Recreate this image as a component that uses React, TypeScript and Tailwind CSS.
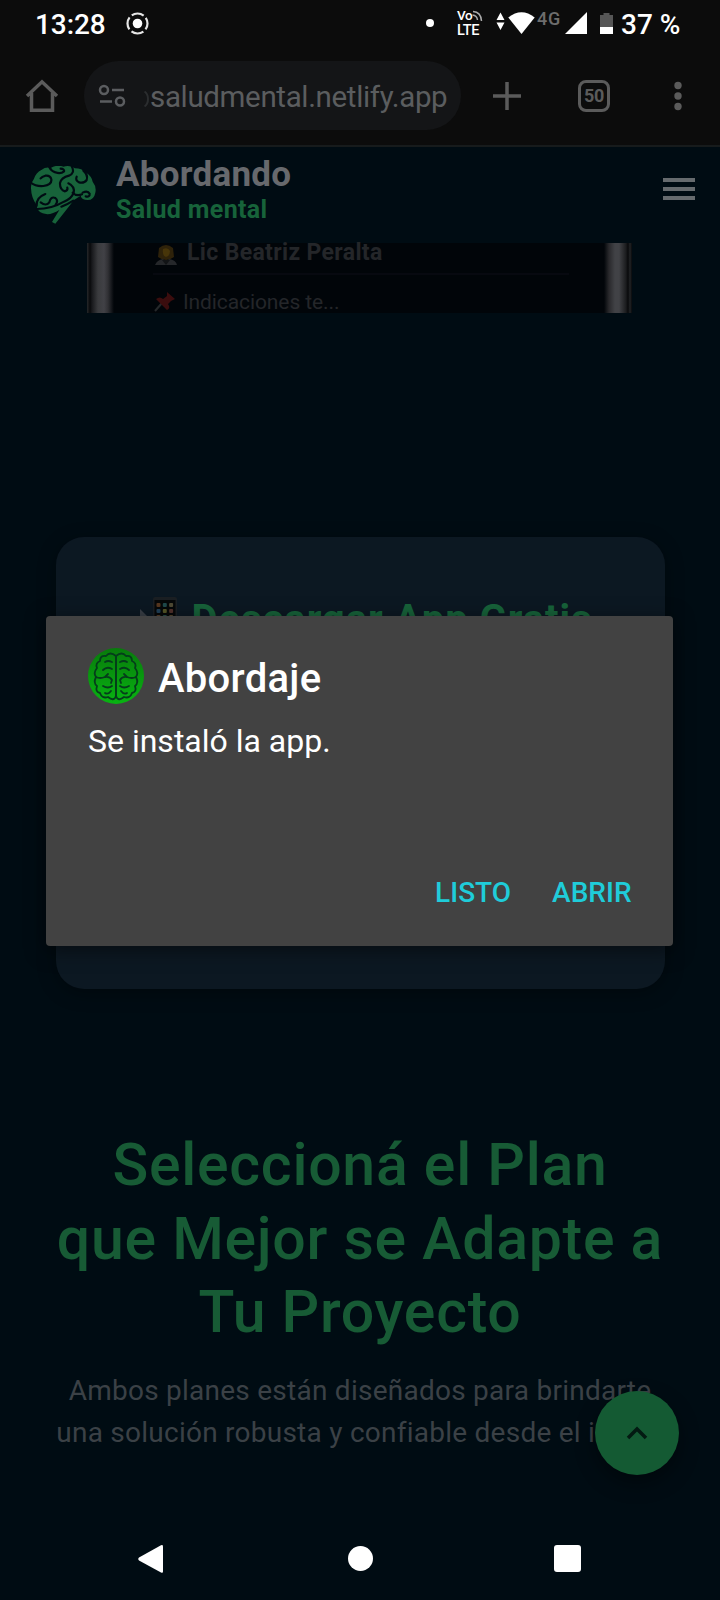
import React from "react";

function StatusBar() {
  return (
    <div className="flex h-[48px] shrink-0 items-start text-white">
      <div className="ml-[35px] mt-[8px] w-[70px] whitespace-nowrap text-[28px] font-medium leading-[34px] tracking-[-0.1px]">13:28</div>
      <svg className="ml-[20px] mt-[11px] shrink-0" width="25" height="25" viewBox="0 0 25 25">
        <circle cx="12.5" cy="12.5" r="4.8" fill="#fff" />
        <circle cx="12.5" cy="12.5" r="10" fill="none" stroke="#e6e6e6" strokeWidth="2.2" strokeDasharray="12.7 3" strokeDashoffset="6.35" />
      </svg>
      <div className="ml-[276px] mt-[19px] h-2 w-2 shrink-0 rounded-full bg-white" />
      <div className="ml-[23px] mt-[9px] flex w-[28px] shrink-0 flex-col">
        <div className="flex h-[13px] items-start">
          <span className="text-[13.5px] font-medium leading-[13px] tracking-[-0.5px]">Vo</span>
          <svg className="shrink-0" width="11" height="13" viewBox="0 0 11 13" fill="none" stroke="#aaa" strokeWidth="1.5">
            <path d="M1 2.5Q9 3 9.500 12M0.500 6Q5 6.500 5.500 11" />
          </svg>
        </div>
        <span className="text-[14.5px] font-medium leading-[18px] tracking-[-0.3px]">LTE</span>
      </div>
      <svg className="ml-[11px] mt-[12px] shrink-0" width="9" height="19" viewBox="0 0 9 19" fill="#fff">
        <path d="M4.500 0.500L8.500 8H0.500ZM4.500 18L8.500 10.500H0.500Z" />
      </svg>
      <svg className="ml-[3px] mt-[12px] shrink-0" width="27" height="22" viewBox="0 0 27 22" fill="#fff">
        <path d="M0.300 5.500Q13.500 -5 26.700 5.500L13.500 22Z" />
      </svg>
      <span className="ml-[2px] mt-[9px] w-[27px] shrink-0 whitespace-nowrap text-[18px] font-medium leading-[20px] tracking-[0.8px] text-[#6d6d6d]">4G</span>
      <svg className="ml-[1px] mt-[12px] shrink-0" width="22" height="22" viewBox="0 0 22 22" fill="#fff">
        <path d="M22 0V22H0Z" />
      </svg>
      <svg className="ml-[13px] mt-[13px] shrink-0" width="13" height="21" viewBox="0 0 13 21">
        <path d="M0 2H3.500V0H9.500V2H13V14H0Z" fill="#565656" />
        <path d="M0 14H13V21H0Z" fill="#fff" />
      </svg>
      <div className="ml-[8px] mt-[8px] whitespace-nowrap text-[28px] font-medium leading-[34px] tracking-[0px]">37 %</div>
    </div>
  );
}

function BrowserBar() {
  return (
    <div className="flex h-[97px] shrink-0 items-start">
      <svg className="ml-[25px] mt-[30px] shrink-0" width="34" height="35" viewBox="0 0 34 35" fill="none" stroke="#5b5b5b" strokeWidth="3.500">
        <path d="M2 18L17 3.800L32 18M6.500 15V32.200H27.500V15" />
      </svg>
      <div className="ml-[25px] mt-[13px] flex h-[69px] w-[377px] shrink-0 items-start rounded-full bg-[#141517]">
        <svg className="ml-[14px] mt-[22px] shrink-0" width="28" height="26" viewBox="0 0 28 26" fill="none" stroke="#5b5d60" strokeWidth="2.500">
          <circle cx="6" cy="7" r="4" />
          <path d="M14 7H26M2 18.500H14" />
          <circle cx="22" cy="18.500" r="4" />
        </svg>
        <svg className="ml-[18px] mt-[29px] shrink-0" width="6" height="18" viewBox="0 0 6 18" fill="none" stroke="#2b2d2f" strokeWidth="2">
          <path d="M0.500 1.500Q4 4 4 9Q4 14 0.500 16.500" />
        </svg>
        <span className="mt-[19px] whitespace-nowrap text-[29.500px] leading-[34px] tracking-[-0.35px] text-[#5b5d5f]">saludmental.netlify.app</span>
      </div>
      <svg className="ml-[31px] mt-[33px] shrink-0" width="30" height="30" viewBox="0 0 30 30" stroke="#5b5b5b" strokeWidth="3.500">
        <path d="M15 1V29M1 15H29" />
      </svg>
      <div className="ml-[56px] mt-[32px] flex h-[32px] w-[32px] shrink-0 items-center justify-center rounded-[8px] border-[3.500px] border-[#5b5b5b] text-[18px] font-bold leading-none tracking-[-0.3px] text-[#5b5b5b]">50</div>
      <svg className="ml-[64px] mt-[33px] shrink-0" width="8" height="30" viewBox="0 0 8 30" fill="#5b5b5b">
        <circle cx="4" cy="4.500" r="3.700" />
        <circle cx="4" cy="15" r="3.700" />
        <circle cx="4" cy="25.500" r="3.700" />
      </svg>
    </div>
  );
}

function BrainMark() {
  return (
    <svg className="ml-[30px] mt-[19px] shrink-0" width="67" height="60" viewBox="30 48 201 180">
      <path
        d="M33 115Q32 98 42 86Q48 68 64 60Q78 50 92 54Q110 43 130 50Q150 45 165 55Q185 55 198 68Q215 78 218 95Q230 110 226 128Q222 150 203 150Q185 150 182 137L162 150Q135 185 106 221L96 216L118 180Q90 198 68 190Q50 183 50 165Q34 145 33 115Z"
        fill="#17633a"
      />
      <g fill="none" stroke="#000c13" strokeWidth="6.500" strokeLinecap="round">
        <path d="M32 98Q48 110 70 108Q96 104 94 88Q91 75 76 77Q66 80 62 85" />
        <path d="M88 52Q94 64 106 67Q122 73 132 64Q134 57 122 56" />
        <path d="M155 48Q166 70 147 77Q124 83 120 99Q119 120 135 124Q144 121 142 113" />
        <path d="M145 100Q165 110 161 128Q155 146 132 155Q95 177 50 177" />
        <path d="M158 128Q170 140 186 133" />
        <path d="M190 62Q205 75 200 90Q192 101 177 97Q165 90 170 80" />
        <path d="M188 128Q203 120 209 131Q210 142 197 139" />
        <path d="M50 168Q47 143 76 132M62 157Q78 170 88 157Q92 138 106 144Q116 152 107 164" />
        <path d="M160 152Q145 162 124 170" />
      </g>
    </svg>
  );
}

function SiteHeader() {
  return (
    <header className="flex h-[97px] shrink-0 items-start border-t-2 border-[#171b1c]">
      <BrainMark />
      <div className="ml-[19px] mt-[8px] flex w-[300px] flex-col whitespace-nowrap">
        <span className="text-[35px] font-bold leading-[40px] tracking-[0.25px] text-[#67696d]">Abordando</span>
        <span className="text-[25px] font-bold leading-[29px] tracking-[0.35px] text-[#17633a]">Salud mental</span>
      </div>
      <div className="ml-[247px] mt-[31px] flex w-[32px] flex-col gap-[5px]">
        <div className="h-[4px] bg-[#666b6e]" />
        <div className="h-[4px] bg-[#666b6e]" />
        <div className="h-[4px] bg-[#666b6e]" />
      </div>
    </header>
  );
}

function PreviewImage() {
  return (
    <div className="ml-[87px] mt-[1px] flex h-[70px] w-[545px] shrink-0 bg-[#010509]">
      <div className="w-[30px] shrink-0 bg-[linear-gradient(90deg,#26282a_0,#08090b_3px,#18191c_5px,#3a3b3e_11px,#414146_17px,#303034_21px,#010509_27px)]" />
      <div className="flex w-[450px] flex-col pl-[36px]">
        <div className="flex h-[33px] w-[416px] items-start border-b-2 border-[#070910]">
          <svg className="mt-[1px] shrink-0" width="26" height="22" viewBox="0 0 26 22">
            <path d="M6 4Q13-2 20 4L21 13Q13 19 5 13Z" fill="#2e220a" />
            <path d="M10 5Q15 3 17 7Q17 12 13 13Q9 12 10 5Z" fill="#473509" />
            <path d="M2 21Q4 16 10 15L13 18L16 15Q23 16 24 21Z" fill="#25272a" />
            <path d="M9 16L13 21L17 16" fill="#121416" />
          </svg>
          <span className="-mt-[4px] ml-[8px] whitespace-nowrap text-[23px] font-bold leading-[28px] tracking-[0.35px] text-[#242629]">Lic Beatriz Peralta</span>
        </div>
        <div className="flex items-start pt-[15px]">
          <svg className="mt-[1px] shrink-0" width="24" height="22" viewBox="0 0 24 22">
            <path d="M2 20L9 12" stroke="#25282a" strokeWidth="2" />
            <path d="M3 8Q7 5 10 8L14 5L14 1L22 8L18 10L15 13Q18 17 14 19Z" fill="#3b0d0e" />
          </svg>
          <span className="ml-[6px] mt-px whitespace-nowrap text-[21px] leading-[22px] tracking-[-0.1px] text-[#242629]">Indicaciones te...</span>
        </div>
      </div>
      <div className="ml-auto w-[28px] shrink-0 bg-[linear-gradient(90deg,#010509_0,#29292c_5px,#414246_11px,#414246_15px,#1b1c1e_22px,#08090b_24px,#222426_26px,#08090b_28px)]" />
    </div>
  );
}

function PhoneEmoji() {
  const dots = ["#57371f", "#1f4a4c", "#4f4a34", "#204058", "#555526", "#50302b", "#553c24", "#234c46", "#51462d"];
  return (
    <svg className="mt-[2px] shrink-0" width="40" height="48" viewBox="0 0 40 48">
      <path d="M0 12L8 20L0 28Z" fill="#393f46" />
      <rect x="13" y="0" width="24" height="46" rx="2" fill="#1b1f23" />
      <rect x="14.500" y="3" width="21" height="39" fill="#060809" />
      {dots.map((color, i) => (
        <rect key={i} x={16.5 + (i % 3) * 6.3} y={6 + Math.floor(i / 3) * 6} width="4" height="4" rx="1" fill={color} />
      ))}
    </svg>
  );
}

function AppIcon() {
  return (
    <svg className="shrink-0" width="56" height="56" viewBox="0 0 56 56">
      <defs>
        <linearGradient id="iconGreen" x1="0" y1="0" x2="0" y2="1">
          <stop offset="0" stopColor="#087a0b" />
          <stop offset="1" stopColor="#08b412" />
        </linearGradient>
        <g id="hemisphere" fill="none" stroke="#053d1b" strokeWidth="1.800" strokeLinecap="round" strokeLinejoin="round">
          <path d="M28 8Q22 3 18 8Q12 7 12 13Q7 15 9 20Q5 25 8 29Q5 35 9 38Q7 44 12 45Q14 51 20 49Q26 54 28 48V8" />
          <path d="M17 14Q20 12 24 14M15 22Q19 18 24 21M8 29Q12 31 17 29L20 26M17 29Q22 28 24 32L23 35M15 38Q20 41 24 38M17 45Q20 47 23 43" />
        </g>
      </defs>
      <circle cx="28" cy="28" r="28" fill="url(#iconGreen)" />
      <use href="#hemisphere" />
      <use href="#hemisphere" transform="matrix(-1 0 0 1 56 0)" />
    </svg>
  );
}

function InstallDialog() {
  return (
    <div role="dialog" className="absolute left-[46px] top-[616px] flex h-[330px] w-[627px] flex-col rounded-[4px] bg-[#424242] shadow-[0_4px_20px_rgba(0,0,0,0.5)]">
      <div className="mt-[32px] flex items-center pl-[42px]">
        <AppIcon />
        <span className="ml-[14px] mt-[5px] whitespace-nowrap text-[40px] font-medium leading-[48px] tracking-[0.3px] text-white">Abordaje</span>
      </div>
      <p className="mt-[17px] whitespace-nowrap pl-[42px] text-[32px] leading-[40px] text-white">Se instaló la app.</p>
      <div className="mt-[115px] flex justify-end gap-[41px] pr-[41.500px] text-[28px] font-medium leading-[34px] text-[#1fccd9]">
        <button className="whitespace-nowrap">LISTO</button>
        <button className="whitespace-nowrap">ABRIR</button>
      </div>
    </div>
  );
}

export default function App() {
  return (
    <div className="relative flex h-[1600px] w-[720px] flex-col overflow-hidden bg-[#000c13] font-[Roboto,sans-serif]">
      <div className="flex shrink-0 flex-col bg-[#0c0c0c]">
        <StatusBar />
        <BrowserBar />
      </div>
      <SiteHeader />
      <PreviewImage />
      <section className="ml-[56px] mt-[224px] flex h-[452px] w-[609px] shrink-0 items-start rounded-[28px] bg-[#0c1822] pt-[58px] shadow-[0_4px_18px_rgba(0,0,0,0.35)]">
        <div className="flex w-full items-start pl-[84px]">
          <PhoneEmoji />
          <h2 className="ml-[11.500px] whitespace-nowrap text-[40px] font-bold leading-[50px] tracking-[0.95px] text-[#17633a]">Descargar App Gratis</h2>
        </div>
      </section>
      <section className="mt-[139px] flex flex-col items-center whitespace-nowrap text-center">
        <h2 className="text-[59px] font-medium leading-[73.500px] tracking-[0.72px] text-[#175b35]">
          Seleccioná el Plan
          <br />
          que Mejor se Adapte a
          <br />
          Tu Proyecto
        </h2>
        <p className="mt-[21px] text-[28px] leading-[42px] tracking-[0.25px] text-[#3b4146]">
          Ambos planes están diseñados para brindarte
          <br />
          una solución robusta y confiable desde el inicio.
        </p>
      </section>
      <nav className="mt-auto flex h-[83px] shrink-0 items-center">
        <svg className="ml-[138px] shrink-0" width="26" height="30" viewBox="0 0 26 30" fill="#fff">
          <path d="M1 13.500L23 1.200Q25 0.500 25 2.500V27.500Q25 29.500 23 28.500L1 16.500Q-0.500 15 1 13.500Z" />
        </svg>
        <div className="ml-[184px] h-[25px] w-[25px] shrink-0 rounded-full bg-white" />
        <div className="ml-[181px] h-[27px] w-[27px] shrink-0 rounded-[3px] bg-white" />
      </nav>
      <button className="absolute left-[595px] top-[1391px] flex h-[84px] w-[84px] items-center justify-center rounded-full bg-[#145a33] shadow-[0_8px_20px_rgba(0,0,0,0.4)]">
        <svg width="22" height="14" viewBox="0 0 22 14" fill="none" stroke="#031a12" strokeWidth="3.500">
          <path d="M2 12L11 3L20 12" />
        </svg>
      </button>
      <InstallDialog />
    </div>
  );
}
